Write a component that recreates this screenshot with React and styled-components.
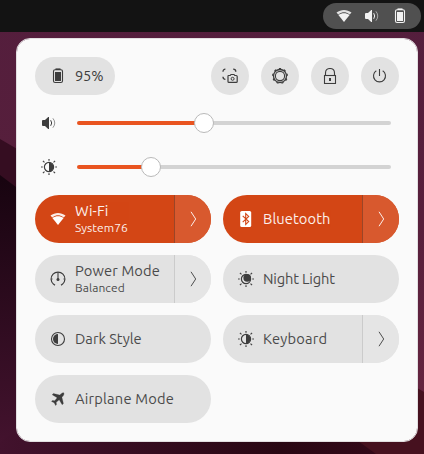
import React from "react";
import styled, { createGlobalStyle, css } from "styled-components";

const GlobalStyle = createGlobalStyle`
  *, *::before, *::after { box-sizing: border-box; }
  html, body, #root { height: 100%; }
  body { margin: 0; overflow: hidden; font-family: Ubuntu, "Noto Sans", sans-serif; }
`;

const Desktop = styled.div`
  position: relative;
  isolation: isolate;
  width: 424px;
  height: 454px;
  overflow: hidden;
`;

const WallpaperArt = styled.svg`
  position: absolute;
  inset: 0;
  z-index: -1;
`;

const TopBar = styled.header`
  display: flex;
  justify-content: flex-end;
  align-items: center;
  height: 32px;
  padding-right: 3px;
  background: #131313;
`;

const StatusButton = styled.div`
  display: flex;
  align-items: center;
  justify-content: center;
  gap: 12px;
  width: 98px;
  height: 26px;
  border-radius: 13px;
  background: #505050;
  color: #f2f2f2;
`;

const Panel = styled.main`
  width: 402px;
  height: 404px;
  margin: 6px 0 0 16px;
  padding: 18px;
  border: 1px solid #e2dfe1;
  border-radius: 14px;
  background: #fafafa;
  background-clip: padding-box;
  color: #3d3d3d;
`;

const SystemRow = styled.div`
  display: flex;
  align-items: center;
  gap: 12px;
  height: 38px;
`;

const BatteryButton = styled.div`
  display: flex;
  align-items: center;
  gap: 9px;
  width: 80px;
  height: 38px;
  margin-right: auto;
  padding-left: 15px;
  border-radius: 19px;
  background: #e2e2e2;
`;

const RoundButton = styled.div`
  display: grid;
  place-items: center;
  width: 38px;
  height: 38px;
  border-radius: 50%;
  background: #e2e2e2;
`;

const Sliders = styled.div`
  display: flex;
  flex-direction: column;
  gap: 24px;
  margin: 18px 8px 18px 6px;
`;

const SliderRow = styled.div`
  display: flex;
  align-items: center;
  gap: 20px;
  height: 20px;
`;

const Track = styled.div`
  position: relative;
  flex: 1;
  height: 4px;
  border-radius: 2px;
  background: linear-gradient(to right, #e95420 ${(p) => p.$value}px, #d3d3d3 ${(p) => p.$value}px);
`;

const Handle = styled.div`
  position: absolute;
  top: -8px;
  left: ${(p) => p.$value - 10}px;
  width: 20px;
  height: 20px;
  border: 1px solid #b9b9b9;
  border-radius: 50%;
  background: #fff;
`;

const Tiles = styled.div`
  display: grid;
  grid-template-columns: 176px 176px;
  grid-auto-rows: 48px;
  gap: 12px;
`;

const TileBox = styled.div`
  display: flex;
  border-radius: 24px;
  overflow: hidden;
  background: #e2e2e2;
  ${(p) => p.$active && css`
    background: #d34615;
    color: #fff;
  `}
`;

const TileBody = styled.div`
  display: flex;
  flex: 1;
  align-items: center;
  gap: 9px;
  padding-left: 15px;
`;

const TileMore = styled.div`
  display: grid;
  place-items: center;
  width: 37px;
  border-left: 1px solid ${(p) => (p.$active ? "#9b4527" : "#cbcbcb")};
  background: ${(p) => (p.$active ? "#d8592e" : "#e5e5e5")};
`;

const TextStack = styled.div`
  display: flex;
  flex-direction: column;
  padding-bottom: ${(p) => (p.$captioned ? 2 : 0)}px;
  opacity: 0.92;
`;

const Label = styled.span`
  font-size: 14.67px;
  line-height: 20px;
  letter-spacing: ${(p) => p.$spacing || 0}px;
  white-space: nowrap;
`;

const Caption = styled.span`
  font-size: 12px;
  line-height: 14px;
  letter-spacing: 0.07px;
  white-space: nowrap;
`;

const IconSvg = styled.svg`
  display: block;
  flex: none;
`;

const Icon = ({ children }) => (
  <IconSvg width="16" height="16" viewBox="0 0 16 16" fill="none" stroke="currentColor">
    {children}
  </IconSvg>
);

const WifiIcon = () => (
  <Icon>
    <path d="M.5 4.7C5 1.2 11 1.2 15.5 4.7L13.8 6.8 13 6.1C9.8 3.9 6.2 3.9 3 6.1L2.2 6.8Z" fill="currentColor" fillOpacity=".9" stroke="none" transform="translate(0 -.2)" />
    <path d="M2.4 7C5.8 4.5 10.2 4.5 13.6 7L8 14Z" fill="currentColor" stroke="none" />
  </Icon>
);

const VolumeIcon = () => (
  <Icon>
    <path d="M1 5.5 2 5H4L7.2 2H8V14H7.2L4 11H2L1 10.5Z" fill="currentColor" stroke="none" />
    <path d="M9.7 5.2Q11.7 8 9.7 10.8" />
    <path d="M11.9 3.3Q15.6 8 11.9 12.7" opacity=".55" />
  </Icon>
);

const BatteryIcon = () => (
  <Icon>
    <path d="M5.5.4H10.5V2H5.5Z" fill="currentColor" stroke="none" />
    <rect x="3.5" y="1.7" width="9" height="12.8" rx="1.6" strokeWidth="1.1" />
    <path d="M5 4H11V13H5Z" fill="currentColor" stroke="none" />
  </Icon>
);

const rays = Array.from({ length: 8 }, (_, i) => i * 45);

const SunIcon = ({ night }) => (
  <Icon>
    {rays.map((a) => (
      <path key={a} d={a % 90 ? "M8 1.6V-.6" : "M8 1.7V.1"} strokeWidth={a % 90 ? 1.1 : 1.7} opacity={a % 90 ? 1 : 0.7} transform={`rotate(${a} 8 8)`} />
    ))}
    <circle cx="8" cy="8" r="4.6" strokeWidth="1.2" />
    {night ? (
      <circle cx="9.2" cy="6.9" r="3.8" fill="currentColor" stroke="none" />
    ) : (
      <path d="M8 3.4A4.6 4.6 0 0 1 8 12.6Z" fill="currentColor" stroke="none" />
    )}
  </Icon>
);

const ScreenshotIcon = () => (
  <Icon>
    <path d="M1 3.8Q1 1.2 3.4 1.2M11.2 1.2Q13.8 1.2 13.8 3.8M1 8.8Q1 11.3 3.4 11.3" strokeWidth="1.3" />
    <path d="M6.5 7.5H8.2L9 6.5H12L12.8 7.5H14.2Q15.2 7.5 15.2 8.4V13.5Q15.2 14.4 14.2 14.4H6.9Q6 14.4 6 13.5V8.2Q6 7.5 6.5 7.5Z" strokeWidth="1.2" />
    <circle cx="10.6" cy="10.8" r="1.5" />
  </Icon>
);

const cogTeeth = Array.from({ length: 9 }, (_, i) => i * 40);

const SettingsIcon = () => (
  <Icon>
    <circle cx="8" cy="8" r="6.5" strokeWidth="1.3" />
    <circle cx="8" cy="8" r="4.6" strokeWidth="1.1" />
    {cogTeeth.map((a) => (
      <path key={a} d="M6.5 1.4 7.1.1H8.9L9.5 1.4Z" fill="currentColor" stroke="none" transform={`rotate(${a} 8 8)`} />
    ))}
  </Icon>
);

const LockIcon = () => (
  <Icon>
    <path d="M3.5 7V5Q3.5.5 8 .5T12.5 5V7" strokeWidth="1.1" />
    <rect x="2.5" y="7.5" width="11" height="8" strokeWidth="1.1" />
    <path d="M7 10H9V13H7Z" fill="currentColor" stroke="none" />
  </Icon>
);

const PowerIcon = () => (
  <Icon>
    <path d="M7.5 1V8" strokeWidth="1.1" />
    <path d="M4.3 2.8A6 6 0 1 0 10.7 2.8" strokeWidth="1.1" />
  </Icon>
);

const BluetoothIcon = () => (
  <Icon>
    <rect x="2.2" y="0" width="11" height="16" rx="1.6" fill="currentColor" stroke="none" />
    <path d="M4.7 4.8 10.7 10.6 7.7 13.4V2.6L10.7 5.4 4.7 11.2" stroke="#d34615" strokeWidth="1.1" />
  </Icon>
);

const GaugeIcon = () => (
  <Icon>
    <path d="M5 14.2 3.4 13.1A6.9 6.9 0 1 1 12.6 13.1L11 14.2" strokeWidth="1.2" />
    <path d="M8 1.2V8" strokeWidth="1.1" />
    <path d="M1 8H2.8M13.2 8H15" opacity=".6" />
    <circle cx="8" cy="8.6" r="1.5" fill="currentColor" stroke="none" />
  </Icon>
);

const DarkIcon = () => (
  <Icon>
    <circle cx="8" cy="8" r="6.5" strokeWidth="1.1" />
    <path d="M8 3A5 5 0 0 0 8 13Z" fill="currentColor" stroke="none" />
  </Icon>
);

const AirplaneIcon = () => (
  <Icon>
    <path d="M13.7 1.8C12.5 1.4 11.3 2.5 9.7 4.1L3.4 2.5 2.2 3.7 7.2 6.8 4.7 9.8 2.4 9.5 1.5 10.4 4.2 11.8 5.6 14.5 6.5 13.6 6.2 11.3 9.2 8.7 12.2 13.8 13.4 12.6 11.9 6.3C13.5 4.8 14.5 3.1 13.7 1.8Z" fill="currentColor" stroke="currentColor" strokeWidth=".3" />
  </Icon>
);

const ChevronIcon = () => (
  <Icon>
    <path d="M6 .8 10.7 8 6 15.2" opacity=".9" />
  </Icon>
);

const Wallpaper = () => (
  <WallpaperArt width="424" height="454" viewBox="0 0 424 454">
    <defs>
      <linearGradient id="plum" x1="0" y1="0" x2="0" y2="1">
        <stop offset="0" stopColor="#541e3d" />
        <stop offset=".5" stopColor="#571f3b" />
        <stop offset="1" stopColor="#692641" />
      </linearGradient>
      <linearGradient id="leftFold" x1="0" y1="180" x2="0" y2="454" gradientUnits="userSpaceOnUse">
        <stop offset="0" stopColor="#180410" />
        <stop offset="1" stopColor="#45132f" />
      </linearGradient>
      <linearGradient id="lower" x1="0" y1="0" x2="1" y2="0">
        <stop offset="0" stopColor="#42122d" />
        <stop offset=".7" stopColor="#290713" />
        <stop offset="1" stopColor="#35091a" />
      </linearGradient>
    </defs>
    <path d="M0 0H424V454H0Z" fill="url(#plum)" />
    <path d="M0 139 60 174V454H0Z" fill="#350d21" />
    <path d="M0 175 60 220V454H0Z" fill="url(#leftFold)" />
    <path d="M16 430H400V454H0V442Z" fill="url(#lower)" />
    <path d="M400 378 424 392V454H376L358 441Z" fill="#46111f" />
  </WallpaperArt>
);

const Slider = ({ icon, value }) => (
  <SliderRow>
    {icon}
    <Track $value={value}>
      <Handle $value={value} />
    </Track>
  </SliderRow>
);

const Tile = ({ icon, label, caption, spacing, active, more }) => (
  <TileBox $active={active}>
    <TileBody>
      {icon}
      <TextStack $captioned={Boolean(caption)}>
        <Label $spacing={spacing}>{label}</Label>
        {caption && <Caption>{caption}</Caption>}
      </TextStack>
    </TileBody>
    {more && (
      <TileMore $active={active}>
        <ChevronIcon />
      </TileMore>
    )}
  </TileBox>
);

export default function App() {
  return (
    <>
      <GlobalStyle />
      <Desktop>
        <Wallpaper />
        <TopBar>
          <StatusButton>
            <WifiIcon />
            <VolumeIcon />
            <BatteryIcon />
          </StatusButton>
        </TopBar>
        <Panel>
          <SystemRow>
            <BatteryButton>
              <BatteryIcon />
              <Label $spacing={-0.2}>95%</Label>
            </BatteryButton>
            <RoundButton><ScreenshotIcon /></RoundButton>
            <RoundButton><SettingsIcon /></RoundButton>
            <RoundButton><LockIcon /></RoundButton>
            <RoundButton><PowerIcon /></RoundButton>
          </SystemRow>
          <Sliders>
            <Slider icon={<VolumeIcon />} value={127} />
            <Slider icon={<SunIcon />} value={73.5} />
          </Sliders>
          <Tiles>
            <Tile active more icon={<WifiIcon />} label="Wi-Fi" caption="System76" spacing={0.1} />
            <Tile active more icon={<BluetoothIcon />} label="Bluetooth" spacing={0.1} />
            <Tile more icon={<GaugeIcon />} label="Power Mode" caption="Balanced" spacing={0.15} />
            <Tile icon={<SunIcon night />} label="Night Light" spacing={-0.15} />
            <Tile icon={<DarkIcon />} label="Dark Style" />
            <Tile more icon={<SunIcon />} label="Keyboard" spacing={0.2} />
            <Tile icon={<AirplaneIcon />} label="Airplane Mode" spacing={0.2} />
          </Tiles>
        </Panel>
      </Desktop>
    </>
  );
}
